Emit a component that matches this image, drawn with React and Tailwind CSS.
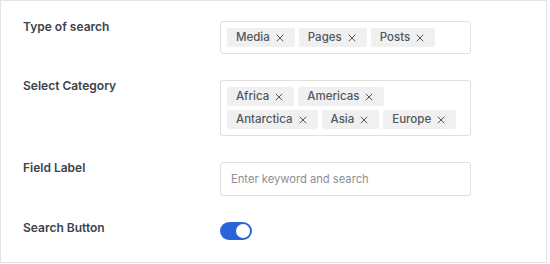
import { X } from "lucide-react";

const typeTags = ["Media", "Pages", "Posts"];
const categoryTags = ["Africa", "Americas", "Antarctica", "Asia", "Europe"];

function Tag({ label }) {
  return (
    <span className="flex h-[19px] items-center gap-[4px] rounded-[2px] bg-[#f0f0f1] pl-[9px] pr-[9px] text-[11.5px] font-medium leading-none text-[#50575e]">
      {label}
      <X className="h-[12px] w-[12px]" strokeWidth={2} />
    </span>
  );
}

function Row({ label, children }) {
  return (
    <div className="flex items-start">
      <div className="w-[197px] text-[12px] font-semibold leading-none text-[#3c434a]">
        {label}
      </div>
      <div className="w-[251px]">{children}</div>
    </div>
  );
}

export default function App() {
  return (
    <div
      className="h-[263px] w-[547px] border border-[#e2e4e7] bg-white pl-[22px] pt-[20px]"
      style={{ fontFamily: "Inter, 'Noto Sans', sans-serif" }}
    >
      <div className="flex flex-col gap-[26px]">
        <Row label="Type of search">
          <div className="flex flex-wrap gap-[4px] rounded-[3px] border border-[#e0e0e0] p-[6px]">
            {typeTags.map((t) => (
              <Tag key={t} label={t} />
            ))}
          </div>
        </Row>

        <Row label="Select Category">
          <div className="flex flex-wrap gap-[4px] rounded-[3px] border border-[#e0e0e0] p-[6px]">
            {categoryTags.map((t) => (
              <Tag key={t} label={t} />
            ))}
          </div>
        </Row>

        <Row label="Field Label">
          <input
            type="text"
            placeholder="Enter keyword and search"
            className="h-[34px] w-full rounded-[3px] border border-[#e0e0e0] px-[10px] text-[11.2px] text-[#3c434a] outline-none placeholder:text-[#8c8f94]"
          />
        </Row>

        <Row label="Search Button">
          <div className="flex h-[18px] w-[32px] items-center justify-end rounded-full bg-[#2b63d9] p-[2px]">
            <span className="h-[14px] w-[14px] rounded-full bg-white" />
          </div>
        </Row>
      </div>
    </div>
  );
}
